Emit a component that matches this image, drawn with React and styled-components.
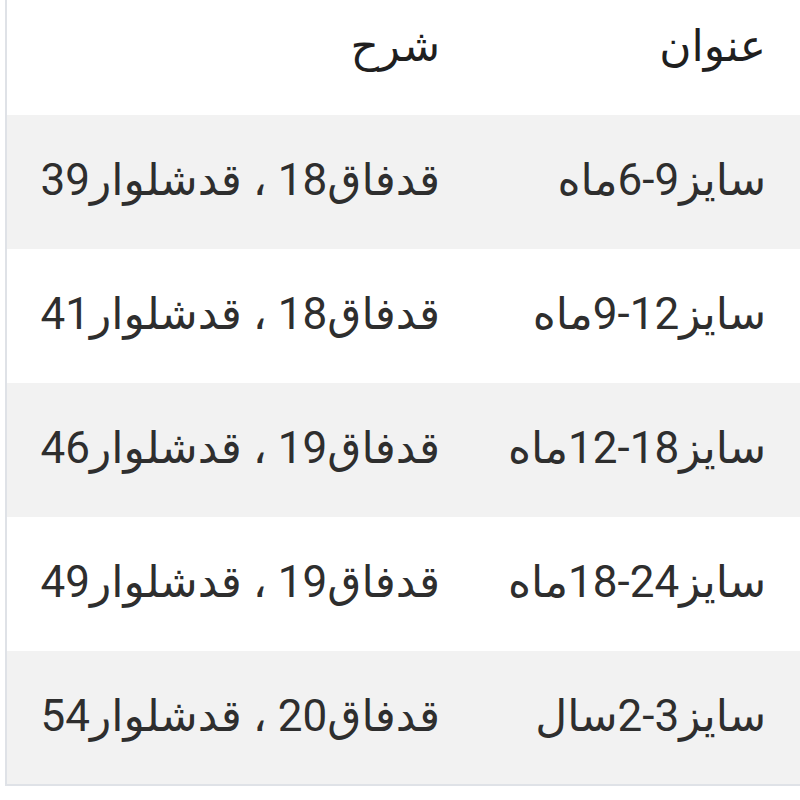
import React from "react";
import styled, { createGlobalStyle } from "styled-components";

const GlobalStyle = createGlobalStyle`
  html, body {
    margin: 0;
    padding: 0;
    background: #ffffff;
  }
  body {
    font-family: Roboto, "DejaVu Sans", sans-serif;
  }
`;

const rows = [
  { title: "سایز9-6ماه", desc: "قدفاق18 ، قدشلوار39" },
  { title: "سایز12-9ماه", desc: "قدفاق18 ، قدشلوار41" },
  { title: "سایز18-12ماه", desc: "قدفاق19 ، قدشلوار46" },
  { title: "سایز24-18ماه", desc: "قدفاق19 ، قدشلوار49" },
  { title: "سایز3-2سال", desc: "قدفاق20 ، قدشلوار54" },
];

function App() {
  return (
    <>
      <GlobalStyle />
      <Wrapper>
        <Table dir="rtl">
          <thead>
            <HeadRow>
              <HeadCell $wide={false}>عنوان</HeadCell>
              <HeadCell $wide>شرح</HeadCell>
            </HeadRow>
          </thead>
          <tbody>
            {rows.map((row, i) => (
              <BodyRow key={row.title} $striped={i % 2 === 0}>
                <Cell>{row.title}</Cell>
                <Cell>{row.desc}</Cell>
              </BodyRow>
            ))}
          </tbody>
        </Table>
      </Wrapper>
    </>
  );
}

const Wrapper = styled.div`
  padding-left: 5px;
  width: 795px;
`;

const Table = styled.table`
  width: 100%;
  border-collapse: collapse;
  border-left: 2px solid #dfe2e7;
  border-bottom: 2px solid #dfe2e7;
  table-layout: fixed;
`;

const HeadRow = styled.tr`
  height: 115px;
  background: #ffffff;
`;

const HeadCell = styled.th`
  box-sizing: border-box;
  width: ${(p) => (p.$wide ? "auto" : "326px")};
  text-align: right;
  vertical-align: top;
  padding: 20px 34px 0 34px;
  font-size: 44px;
  font-weight: 400;
  color: #1f1f1f;
  white-space: nowrap;
`;

const BodyRow = styled.tr`
  height: 134px;
  background: ${(p) => (p.$striped ? "#f2f2f2" : "#ffffff")};
`;

const Cell = styled.td`
  text-align: right;
  vertical-align: middle;
  padding: 0 34px 4px 34px;
  font-size: 44px;
  color: #2e2e2e;
  white-space: nowrap;
`;

export default App;
